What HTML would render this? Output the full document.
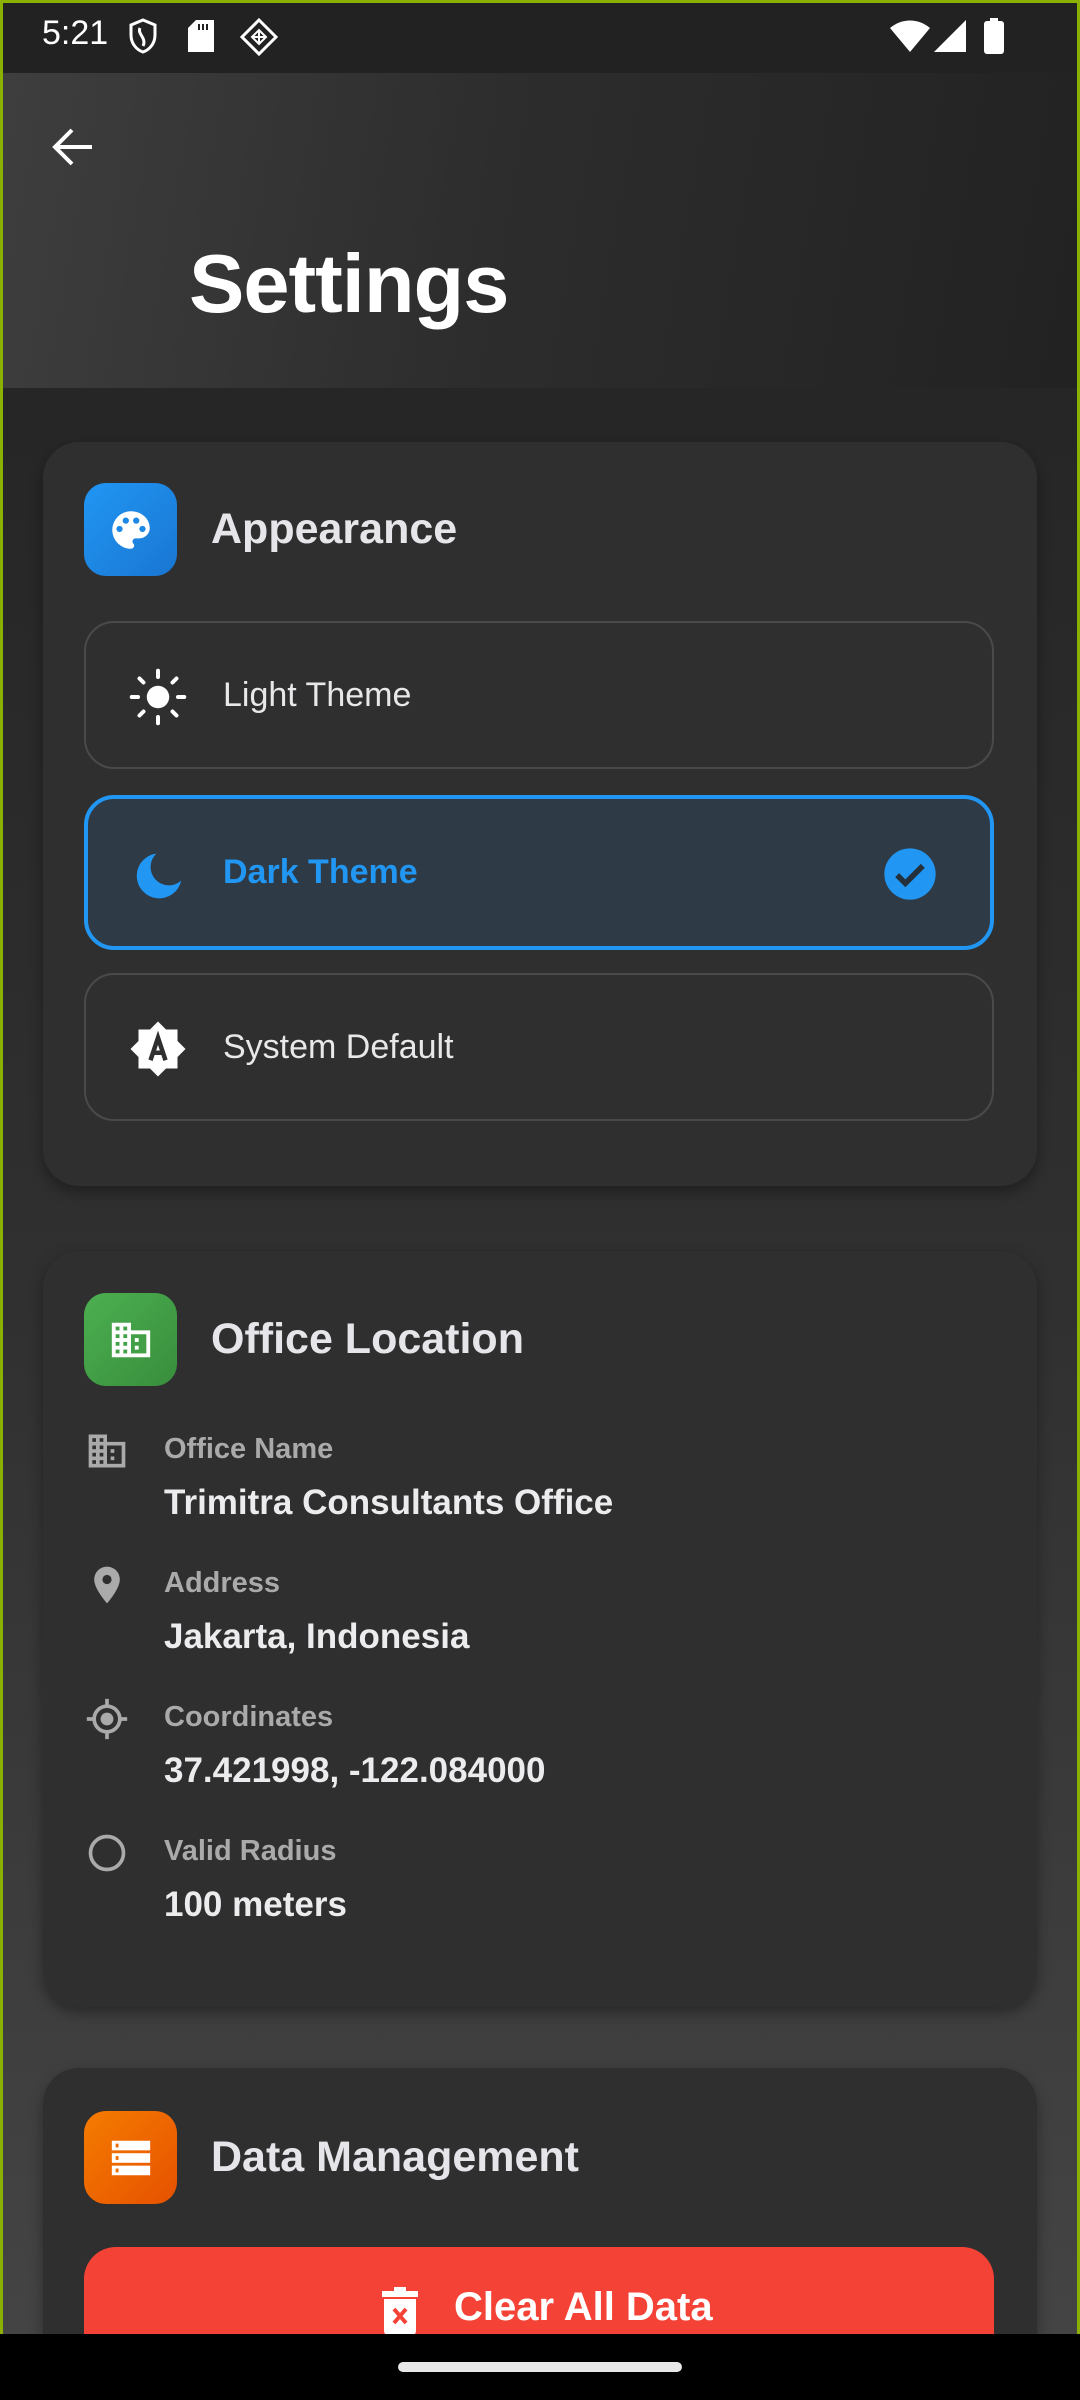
<!DOCTYPE html>
<html><head><meta charset="utf-8"><style>
*{box-sizing:border-box;margin:0;padding:0}
body{width:1080px;height:2400px;overflow:hidden;background:#000;font-family:"Liberation Sans",sans-serif;position:relative}
.frame{position:absolute;left:0;top:0;width:1080px;height:2334px;background:linear-gradient(180deg,#222 0px,#262626 400px,#303030 1300px,#404040 2100px,#444 2334px);overflow:hidden}
.bord{position:absolute;left:0;top:0;width:1080px;height:2334px;border:3px solid #8cb000;border-bottom:none;z-index:5;pointer-events:none}
.status{position:absolute;left:0;top:0;width:1080px;height:73px;background:#222;color:#fff}
.header{position:absolute;left:0;top:73px;width:1080px;height:315px;background:linear-gradient(100deg,#3e3e3e 0%,#2d2d2d 45%,#222 100%)}
.card{position:absolute;left:43px;width:994px;background:#2f2f2f;border-radius:36px;box-shadow:0 6px 14px rgba(0,0,0,.35)}
.ibox{position:absolute;left:41px;width:93px;height:93px;border-radius:22px}
.title{position:absolute;left:168px;color:#e6e6ea;font-weight:bold;font-size:43px;line-height:50px}
.opt{position:absolute;left:41px;width:910px;border:2px solid #4a4a4a;border-radius:30px}
.opt .t{position:absolute;left:137px;top:0;bottom:0;display:flex;align-items:center;font-size:34px;color:#e8e8ea}
.opt svg{position:absolute}
.row{position:absolute;left:0;width:994px}
.lab{position:absolute;left:121px;font-size:29px;color:#aaa;font-weight:bold;top:2px}
.val{position:absolute;left:121px;font-size:35px;color:#ececee;font-weight:bold;top:52px}
.row svg{position:absolute;left:42px;top:-2px}
</style></head><body>
<div class="frame">
<div class="status">
 <div style="position:absolute;left:42px;top:14px;font-size:34px;">5:21</div>
 <svg style="position:absolute;left:128px;top:18px" width="30" height="36" viewBox="0 0 30 36"><path d="M15 2 L27 7 V17 C27 26 21 32 15 34 C9 32 3 26 3 17 V7 Z" fill="none" stroke="#fff" stroke-width="3"/><path d="M12 10 C9 16 19 20 15 28" fill="none" stroke="#fff" stroke-width="3"/></svg>
 <svg style="position:absolute;left:188px;top:20px" width="26" height="32"><path d="M8 0 H26 V32 H0 V8 Z" fill="#fff"/><rect x="10" y="4" width="2" height="6" fill="#222"/><rect x="14" y="4" width="2" height="6" fill="#222"/><rect x="18" y="4" width="2" height="6" fill="#222"/></svg>
 <svg style="position:absolute;left:240px;top:18px" width="38" height="38" viewBox="0 0 38 38"><path d="M19 2 L36 19 L19 36 L2 19 Z" fill="none" stroke="#fff" stroke-width="3"/><path d="M12 19 L19 12 L26 19 L19 26 Z" fill="none" stroke="#fff" stroke-width="2"/><path d="M19 12 V26 M12 19 H26" stroke="#fff" stroke-width="2"/></svg>
 <svg style="position:absolute;left:890px;top:20px" width="40" height="32" viewBox="0 0 40 32"><path d="M0 8 C12 -2 28 -2 40 8 L20 32 Z" fill="#fff"/></svg>
 <svg style="position:absolute;left:934px;top:20px" width="32" height="32"><path d="M32 0 V32 H0 Z" fill="#fff"/></svg>
 <svg style="position:absolute;left:984px;top:18px" width="20" height="36"><rect x="6" y="0" width="8" height="4" fill="#fff"/><rect x="0" y="3" width="20" height="33" rx="3" fill="#fff"/></svg>
</div>
<div class="header">
 <svg style="position:absolute;left:50px;top:54px" width="44" height="40" viewBox="0 0 44 40"><path d="M22 3 L5 20 L22 37 M5 20 H42" fill="none" stroke="#fff" stroke-width="4"/></svg>
 <div style="position:absolute;left:189px;top:166px;font-size:83px;font-weight:bold;color:#fff;line-height:90px;letter-spacing:-1px">Settings</div>
</div>

<div class="card" style="top:442px;height:744px">
 <div class="ibox" style="top:41px;background:linear-gradient(135deg,#2196f3,#1976d2)">
  <svg style="position:absolute;left:22px;top:22px" width="50" height="50" viewBox="0 0 24 24"><path d="M12 3a9 9 0 0 0 0 18c.8 0 1.5-.7 1.5-1.5 0-.4-.1-.7-.4-1-.2-.3-.4-.6-.4-1 0-.8.7-1.5 1.5-1.5H16c2.8 0 5-2.2 5-5 0-4.4-4-8-9-8z" fill="#fff"/><circle cx="6.5" cy="11.5" r="1.5" fill="#1e88e5"/><circle cx="9.5" cy="7.5" r="1.5" fill="#1e88e5"/><circle cx="14.5" cy="7.5" r="1.5" fill="#1e88e5"/><circle cx="17.5" cy="11.5" r="1.5" fill="#1e88e5"/></svg>
 </div>
 <div class="title" style="top:62px">Appearance</div>
 <div class="opt" style="top:179px;height:148px">
  <svg style="left:42px;top:44px" width="60" height="60" viewBox="0 0 24 24"><circle cx="12" cy="12" r="4.5" fill="#fff"/><g stroke="#fff" stroke-width="1.6" stroke-linecap="round"><path d="M12 1.5v2.5M12 20v2.5M1.5 12H4M20 12h2.5M4.6 4.6l1.6 1.6M17.8 17.8l1.6 1.6M4.6 19.4l1.6-1.6M17.8 6.2l1.6-1.6"/></g></svg>
  <div class="t">Light Theme</div>
 </div>
 <div class="opt" style="top:353px;height:155px;border:4px solid #2196f3;background:#2e3a46">
  <svg style="left:46px;top:50px" width="54" height="54" viewBox="0 0 24 24"><path d="M10 2a10 10 0 1 0 11 12A7.5 7.5 0 0 1 10 2z" fill="#2196f3"/></svg>
  <div class="t" style="left:135px;color:#2196f3;font-weight:bold">Dark Theme</div>
  <svg style="left:794px;top:47px" width="56" height="56" viewBox="0 0 24 24"><circle cx="12" cy="12" r="11" fill="#2196f3"/><path d="M6.5 12.5l3.5 3.5 7.5-7.5" fill="none" stroke="#24303c" stroke-width="2.4"/></svg>
 </div>
 <div class="opt" style="top:531px;height:148px">
  <svg style="left:42px;top:44px" width="60" height="60" viewBox="0 0 24 24"><path d="M12 1l3.2 3.2h4.6v4.6L23 12l-3.2 3.2v4.6h-4.6L12 23l-3.2-3.2H4.2v-4.6L1 12l3.2-3.2V4.2h4.6z" fill="#fff"/><path d="M9 16.5l3-9 3 9M10 13.5h4" fill="none" stroke="#2f2f2f" stroke-width="1.8"/></svg>
  <div class="t">System Default</div>
 </div>
</div>

<div class="card" style="top:1251px;height:756px">
 <div class="ibox" style="top:42px;background:linear-gradient(135deg,#4caf50,#388e3c)">
  <svg style="position:absolute;left:24px;top:24px" width="46" height="46" viewBox="0 0 24 24"><path d="M2 3h10v4h10v14H2z" fill="#fff"/><g fill="#43a047"><rect x="4" y="5" width="2" height="2"/><rect x="8" y="5" width="2" height="2"/><rect x="4" y="9" width="2" height="2"/><rect x="8" y="9" width="2" height="2"/><rect x="4" y="13" width="2" height="2"/><rect x="8" y="13" width="2" height="2"/><rect x="4" y="17" width="2" height="2"/><rect x="8" y="17" width="2" height="2"/><rect x="12" y="9" width="8" height="10"/></g><g fill="#fff"><rect x="14" y="11" width="2" height="2"/><rect x="14" y="15" width="2" height="2"/></g></svg>
 </div>
 <div class="title" style="top:63px">Office Location</div>
 <div class="row" style="top:180px">
  <svg width="44" height="44" viewBox="0 0 24 24"><path d="M2 3h10v4h10v14H2z" fill="#aaa"/><g fill="#2f2f2f"><rect x="4" y="5" width="2" height="2"/><rect x="8" y="5" width="2" height="2"/><rect x="4" y="9" width="2" height="2"/><rect x="8" y="9" width="2" height="2"/><rect x="4" y="13" width="2" height="2"/><rect x="8" y="13" width="2" height="2"/><rect x="4" y="17" width="2" height="2"/><rect x="8" y="17" width="2" height="2"/><rect x="12" y="9" width="8" height="10"/></g><g fill="#aaa"><rect x="14" y="11" width="2" height="2"/><rect x="14" y="15" width="2" height="2"/></g></svg>
  <div class="lab">Office Name</div><div class="val">Trimitra Consultants Office</div>
 </div>
 <div class="row" style="top:314px">
  <svg width="44" height="44" viewBox="0 0 24 24"><path d="M12 2a7 7 0 0 0-7 7c0 5.2 7 13 7 13s7-7.8 7-13a7 7 0 0 0-7-7z" fill="#aaa"/><circle cx="12" cy="9" r="2.5" fill="#2f2f2f"/></svg>
  <div class="lab">Address</div><div class="val">Jakarta, Indonesia</div>
 </div>
 <div class="row" style="top:448px">
  <svg width="44" height="44" viewBox="0 0 24 24"><circle cx="12" cy="12" r="7" fill="none" stroke="#aaa" stroke-width="2"/><circle cx="12" cy="12" r="3.5" fill="#aaa"/><path d="M12 1v4M12 19v4M1 12h4M19 12h4" stroke="#aaa" stroke-width="2"/></svg>
  <div class="lab">Coordinates</div><div class="val">37.421998, -122.084000</div>
 </div>
 <div class="row" style="top:582px">
  <svg width="44" height="44" viewBox="0 0 24 24"><circle cx="12" cy="12" r="9" fill="none" stroke="#aaa" stroke-width="2"/></svg>
  <div class="lab">Valid Radius</div><div class="val">100 meters</div>
 </div>
</div>

<div class="card" style="top:2068px;height:400px">
 <div class="ibox" style="top:43px;background:linear-gradient(135deg,#f57c00,#e65100)">
  <svg style="position:absolute;left:24px;top:24px" width="46" height="46" viewBox="0 0 24 24"><g fill="#fff"><rect x="2" y="3" width="20" height="5"/><rect x="2" y="9.5" width="20" height="5"/><rect x="2" y="16" width="20" height="5"/></g><g fill="#ef6c00"><rect x="4" y="4.5" width="1.5" height="2"/><rect x="4" y="11" width="1.5" height="2"/><rect x="4" y="17.5" width="1.5" height="2"/></g></svg>
 </div>
 <div class="title" style="top:64px">Data Management</div>
 <div style="position:absolute;left:41px;top:179px;width:910px;height:160px;border-radius:32px;background:#f44336">
  <svg style="position:absolute;left:294px;top:38px" width="44" height="52" viewBox="0 0 22 26"><rect x="2" y="3" width="18" height="3" fill="#fff"/><rect x="8" y="1" width="6" height="3" fill="#fff"/><path d="M3 7h16v16a2 2 0 0 1-2 2H5a2 2 0 0 1-2-2z" fill="#fff"/><path d="M8 12l6 7M14 12l-6 7" stroke="#f44336" stroke-width="2"/></svg>
  <div style="position:absolute;left:370px;top:38px;font-size:40px;font-weight:bold;color:#fff">Clear All Data</div>
 </div>
</div>
</div>
<div class="bord"></div>
<div style="position:absolute;left:398px;top:2362px;width:284px;height:10px;border-radius:5px;background:#e8e8e8"></div>
</body></html>
